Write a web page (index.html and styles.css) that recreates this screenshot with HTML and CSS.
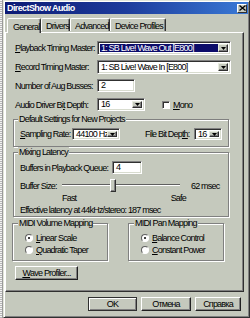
FILE: index.html
```html
<!DOCTYPE html>
<html>
<head>
<meta charset="utf-8">
<link rel="stylesheet" href="styles.css">
</head>
<body>
<div class="screen">
  <div class="desk"></div>
  <div class="window">
    <div class="titlebar">
      <span class="title">DirectShow Audio</span>
      <span class="close"><svg width="7" height="6" viewBox="0 0 7 6"><path d="M0.5 0.5 L6.5 5.5 M6.5 0.5 L0.5 5.5" stroke="#000" stroke-width="1.3"/></svg></span>
    </div>
    <div class="client">
      <div class="tabs">
        <div class="tab active">General</div>
        <div class="tab w-drv">Drivers</div>
        <div class="tab w-adv">Advanced</div>
        <div class="tab w-dev">Device Profiles</div>
      </div>
      <div class="panel">
        <div class="row r14">
          <span class="lbl"><u>P</u>layback Timing Master:</span>
          <div class="combo wide selected"><span class="val">1: SB Live! Wave Out [E800]</span><span class="arrow"><svg width="5" height="3" viewBox="0 0 5 3"><path d="M0 0H5L2.5 3Z" fill="#000"/></svg></span></div>
        </div>
        <div class="row r14 gap5">
          <span class="lbl"><u>R</u>ecord Timing Master:</span>
          <div class="combo wide"><span class="val">1: SB Live! Wave In [E800]</span><span class="arrow"><svg width="5" height="3" viewBox="0 0 5 3"><path d="M0 0H5L2.5 3Z" fill="#000"/></svg></span></div>
        </div>
        <div class="row r13 gap5">
          <span class="lbl">Number of Aug Busses:</span>
          <div class="edit w38"><span class="val">2</span></div>
        </div>
        <div class="row r13 gap6">
          <span class="lbl">Audio Driver Bi<u>t</u> Depth:</span>
          <div class="combo w48"><span class="val">16</span><span class="arrow"><svg width="5" height="3" viewBox="0 0 5 3"><path d="M0 0H5L2.5 3Z" fill="#000"/></svg></span></div>
          <span class="check"></span><span class="cktext"><u>M</u>ono</span>
        </div>

        <fieldset class="group g1">
          <legend>Default Settings for New Projects</legend>
          <div class="row r12">
            <span class="lbl2"><u>S</u>ampling Rate:</span>
            <div class="combo w48"><span class="val">44100 Hz</span><span class="arrow"><svg width="5" height="3" viewBox="0 0 5 3"><path d="M0 0H5L2.5 3Z" fill="#000"/></svg></span></div>
            <span class="lbl3">File Bit Dep<u>th</u>:</span>
            <div class="combo w28"><span class="val">16</span><span class="arrow"><svg width="5" height="3" viewBox="0 0 5 3"><path d="M0 0H5L2.5 3Z" fill="#000"/></svg></span></div>
          </div>
        </fieldset>

        <fieldset class="group g2">
          <legend>Mixing Latency</legend>
          <div class="row r13">
            <span class="lbl4">Buffers in Playback Queue:</span>
            <div class="edit w30"><span class="val">4</span></div>
          </div>
          <div class="row r13 gap5">
            <span class="lbl5">Buffer Size:</span>
            <div class="slider"><span class="track"></span><span class="thumb"></span></div>
            <span class="msec">62 msec</span>
          </div>
          <div class="ticks"><span>Fast</span><span>Safe</span></div>
          <div class="eff">Effective latency at 44kHz/stereo: 187 msec</div>
        </fieldset>

        <div class="pair">
          <fieldset class="group g3">
            <legend>MIDI Volume Mapping</legend>
            <div class="radio-row"><span class="radio on"></span><span><u>L</u>inear Scale</span></div>
            <div class="radio-row"><span class="radio"></span><span><u>Q</u>uadratic Taper</span></div>
          </fieldset>
          <fieldset class="group g3">
            <legend>MIDI Pan Mapping</legend>
            <div class="radio-row"><span class="radio on"></span><span><u>B</u>alance Control</span></div>
            <div class="radio-row"><span class="radio"></span><span><u>C</u>onstant Power</span></div>
          </fieldset>
        </div>

        <div class="btn wave"><u>W</u>ave Profiler...</div>
      </div>
      <div class="buttons">
        <div class="btn b-ok">OK</div>
        <div class="btn b-cancel">Отмена</div>
        <div class="btn b-help">Справка</div>
      </div>
    </div>
  </div>
</div>
</body>
</html>
```
FILE: styles.css
```css
* { box-sizing: border-box; }
html, body { margin: 0; padding: 0; }
body {
  width: 250px;
  height: 318px;
  overflow: hidden;
  background: #c5c9bd;
  font-family: "Liberation Sans", Arial, sans-serif;
  font-size: 9px;
  letter-spacing: -0.8px;
  color: #000;
}
u { text-decoration: underline; text-underline-offset: 1px; }
.screen { display: flex; height: 318px; }
.desk {
  width: 3px;
  flex: none;
  background: repeating-linear-gradient(#f4f4f4 0 1px, #b8b8b8 1px 2px);
  border-right: 1px solid #9a9a9a;
}
.window {
  width: 247px;
  height: 318px;
  flex: none;
  border: 1px solid;
  border-color: #e2e6da #303030 #303030 #e2e6da;
  box-shadow: inset 1px 1px #fff, inset -1px -1px #808080;
  padding: 1px 1px 1px 1px;
  display: flex;
  flex-direction: column;
}
.titlebar {
  height: 12px;
  flex: none;
  display: flex;
  align-items: center;
  justify-content: space-between;
  padding-left: 2px;
  background: linear-gradient(to right, #0c1a74, #1d3c9c 50%, #3a7ad6);
}
.title { color: #fff; font-weight: bold; letter-spacing: -0.6px; }
.close {
  width: 10px;
  height: 9px;
  margin-right: 1px;
  background: #c5c9bd;
  border: 1px solid;
  border-color: #fff #303030 #303030 #fff;
  display: flex;
  align-items: center;
  justify-content: center;
}
.close svg { display: block; }
.client { display: flex; flex-direction: column; flex: 1; }
.tabs {
  display: flex;
  align-items: flex-end;
  height: 18px;
  padding-left: 2px;
  position: relative;
  z-index: 2;
}
.tab {
  height: 13px;
  border: 1px solid;
  border-bottom: none;
  border-color: #fff #303030 transparent #fff;
  border-radius: 2px 2px 0 0;
  box-shadow: inset -1px 0 #808080;
  padding: 2px 0 0 4px;
  margin-bottom: 1px;
}
.tab.active {
  width: 34px;
  height: 15px;
  margin-bottom: -1px;
  background: #c5c9bd;
  padding: 3px 0 0 5px;
}
.w-drv { width: 29px; }
.w-adv { width: 40px; }
.w-dev { width: 56px; }
.panel {
  width: 239px;
  height: 260px;
  border: 1px solid;
  border-color: #fff #303030 #303030 #fff;
  box-shadow: inset -1px -1px #808080;
  padding: 8px 0 0 9px;
  position: relative;
  z-index: 1;
}
.row { display: flex; align-items: center; }
.r14 { height: 14px; }
.r13 { height: 13px; }
.r12 { height: 12px; }
.gap5 { margin-top: 5px; }
.gap6 { margin-top: 6px; }
.lbl { width: 82px; flex: none; white-space: nowrap; }
.combo, .edit {
  display: flex;
  align-items: center;
  height: 100%;
  background: #fff;
  border: 1px solid;
  border-color: #808080 #fff #fff #808080;
  box-shadow: inset 1px 1px #303030, inset -1px -1px #d8dccf;
  padding: 2px;
  flex: none;
}
.val { flex: 1; padding-left: 1px; white-space: nowrap; overflow: hidden; line-height: 9px; }
.combo.selected .val { background: #0c0c6a; color: #fff; height: 100%; display: flex; align-items: center; }
.arrow {
  width: 10px;
  height: 100%;
  flex: none;
  background: #c5c9bd;
  border: 1px solid;
  border-color: #e8ecdf #303030 #303030 #e8ecdf;
  box-shadow: inset -1px -1px #808080;
  display: flex;
  align-items: center;
  justify-content: center;
}
.arrow svg { display: block; }
.wide { width: 134px; }
.w48 { width: 48px; }
.w28 { width: 28px; }
.w38 { width: 38px; }
.w30 { width: 30px; }
.check {
  width: 8px;
  height: 8px;
  margin-left: 17px;
  background: #fff;
  border: 1px solid;
  border-color: #808080 #fff #fff #808080;
  box-shadow: inset 1px 1px #303030;
  flex: none;
}
.cktext { margin-left: 3px; }

.group {
  margin: 0 0 0 -2px;
  padding: 4px 6px 6px 6px;
  border: 1px solid #808080;
  box-shadow: 1px 1px 0 #fff, inset 1px 1px 0 #fff;
  min-inline-size: 0;
}
.group legend {
  padding: 0 1px;
  margin-left: -2px;
  line-height: 10px;
  background: #c5c9bd;
  position: relative;
}
.g1 { width: 216px; margin-top: 3px; }
.lbl2 { width: 52px; flex: none; }
.lbl3 { margin-left: 25px; width: 49px; flex: none; white-space: nowrap; }
.g2 { width: 216px; margin-top: 0; padding-bottom: 1px; }
.lbl4 { width: 92px; flex: none; white-space: nowrap; }
.lbl5 { width: 42px; flex: none; }
.slider { position: relative; width: 118px; height: 13px; flex: none; }
.track {
  position: absolute;
  left: 0; right: 0; top: 5px;
  height: 2px;
  border-top: 1px solid #606060;
  border-bottom: 1px solid #fff;
}
.thumb {
  position: absolute;
  left: 48px; top: 0;
  width: 6px; height: 13px;
  background: #c5c9bd;
  border: 1px solid;
  border-color: #fff #303030 #303030 #fff;
  box-shadow: inset -1px -1px #808080;
}
.msec { margin-left: 11px; white-space: nowrap; }
.ticks {
  display: flex;
  justify-content: space-between;
  width: 124px;
  margin-left: 42px;
  margin-top: 1px;
  line-height: 10px;
}
.eff { margin-top: 2px; line-height: 10px; white-space: nowrap; }

.pair { display: flex; gap: 22px; margin-left: -1px; margin-top: 1px; }
.g3 { width: 96px; padding: 5px 4px 5px 12px; }
.g3 legend { margin-left: -7px; }
.radio-row { display: flex; align-items: center; height: 10px; margin-bottom: 2px; white-space: nowrap; }
.radio-row:last-child { margin-bottom: 0; }
.radio {
  width: 8px; height: 8px;
  border-radius: 50%;
  background: #fff;
  border: 1px solid;
  border-color: #606060 #fff #fff #606060;
  margin-right: 3px;
  flex: none;
  display: flex;
  align-items: center;
  justify-content: center;
}
.radio.on::after { content: ""; width: 2px; height: 2px; background: #000; border-radius: 50%; }

.btn {
  height: 14px;
  display: flex;
  align-items: center;
  justify-content: center;
  border: 1px solid;
  border-color: #fff #202020 #202020 #fff;
  box-shadow: inset -1px -1px #808080;
  background: #c5c9bd;
  white-space: nowrap;
}
.wave { width: 63px; margin-top: 5px; }
.buttons { display: flex; gap: 4px; margin-top: 5px; padding-left: 83px; }
.b-ok { width: 49px; border-color: #303030; box-shadow: inset 1px 1px #fff, inset -1px -1px #808080; }
.b-cancel { width: 50px; }
.b-help { width: 46px; }
```
